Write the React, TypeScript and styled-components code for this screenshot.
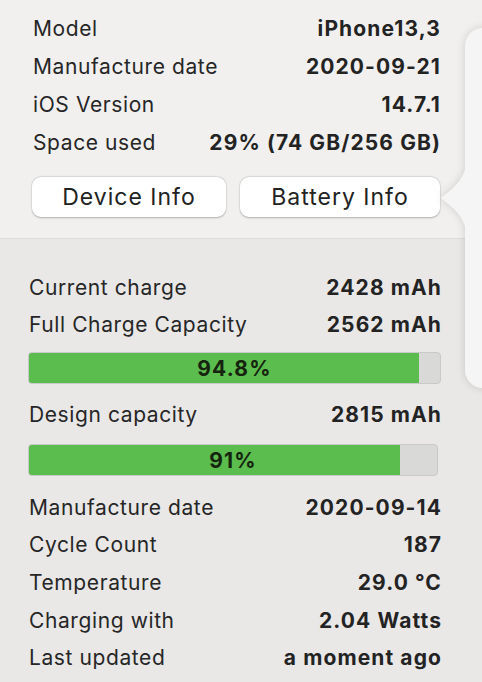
import React from 'react';
import styled, { createGlobalStyle } from 'styled-components';

const GlobalStyle = createGlobalStyle`
  html, body {
    margin: 0;
    padding: 0;
    background: #e9e8e7;
    overflow: hidden;
  }
  body {
    font-family: Inter, "Liberation Sans", sans-serif;
    -webkit-font-smoothing: antialiased;
  }
`;

const Page = styled.div`
  position: relative;
  width: 482px;
  height: 682px;
  overflow: hidden;
`;

const DeviceSection = styled.section`
  background: #f1f0ef;
  border-bottom: 1px solid #dddcdb;
  padding: 9px 42px 21px 33px;
  height: 239px;
  box-sizing: border-box;
`;

const BatterySection = styled.section`
  padding: 30px 41px 0 29px;
`;

const Row = styled.div<{ $h?: number }>`
  display: flex;
  justify-content: space-between;
  align-items: center;
  height: ${(p) => p.$h ?? 37}px;
  font-size: 21px;
  letter-spacing: 0.6px;
  color: #262626;
  white-space: nowrap;
`;

const Value = styled.span`
  font-weight: 700;
  letter-spacing: 1.1px;
  margin-right: -1px;
  color: #232323;
`;

const Buttons = styled.div`
  display: flex;
  gap: 14px;
  margin-top: 16px;
  margin-left: -1px;
`;

const Button = styled.button<{ $w: number }>`
  width: ${(p) => p.$w}px;
  height: 40px;
  border: none;
  border-radius: 9px;
  background: #ffffff;
  box-shadow: 0 0.5px 2px rgba(0, 0, 0, 0.25), 0 0 0 0.5px rgba(0, 0, 0, 0.06);
  font-family: Inter, "Liberation Sans", sans-serif;
  font-size: 23px;
  letter-spacing: 1px;
  color: #222;
  padding: 0;
`;

const Bar = styled.div<{ $w: number; $mt: number; $mb: number }>`
  position: relative;
  width: ${(p) => p.$w}px;
  height: 32px;
  margin: ${(p) => p.$mt}px 0 ${(p) => p.$mb}px -1px;
  background: #d9d9d8;
  border: 1px solid #c9c9c8;
  border-radius: 4px;
  box-sizing: border-box;
  overflow: hidden;
  display: flex;
  align-items: center;
  justify-content: center;
`;

const Fill = styled.div`
  position: absolute;
  left: -1px;
  top: -1px;
  bottom: -1px;
  background: #5bbd4d;
  border: 1px solid #4fa843;
  border-right: none;
  border-radius: 4px 0 0 4px;
`;

const BarLabel = styled.span`
  position: relative;
  font-size: 21px;
  font-weight: 700;
  color: #16240f;
  letter-spacing: 1.2px;
`;

const Popover = styled.div`
  position: absolute;
  left: 440px;
  top: 28px;
  width: 60px;
  height: 360px;
  filter: drop-shadow(0 0 4px rgba(0, 0, 0, 0.14));
`;

const PopoverBody = styled.div`
  position: absolute;
  left: 25px;
  top: 0;
  right: 0;
  bottom: 0;
  background: #f5f5f5;
  border-radius: 18px 0 0 18px;
`;

const Arrow = styled.svg`
  position: absolute;
  left: 0;
  top: 132px;
`;

const ProgressBar = ({ pct, width, label, mt, mb }: { pct: number; width: number; label: string; mt: number; mb: number }) => (
  <Bar $w={width} $mt={mt} $mb={mb}>
    <Fill style={{ width: `${pct}%` }} />
    <BarLabel>{label}</BarLabel>
  </Bar>
);

export default function App() {
  return (
    <Page>
      <GlobalStyle />
      <DeviceSection>
        <Row $h={38}>
          <span>Model</span>
          <Value>iPhone13,3</Value>
        </Row>
        <Row $h={38}>
          <span>Manufacture date</span>
          <Value>2020-09-21</Value>
        </Row>
        <Row $h={38}>
          <span>iOS Version</span>
          <Value>14.7.1</Value>
        </Row>
        <Row $h={38}>
          <span>Space used</span>
          <Value>29% (74 GB/256 GB)</Value>
        </Row>
        <Buttons>
          <Button $w={194}>Device Info</Button>
          <Button $w={200}>Battery Info</Button>
        </Buttons>
      </DeviceSection>
      <BatterySection>
        <Row>
          <span>Current charge</span>
          <Value>2428 mAh</Value>
        </Row>
        <Row>
          <span>Full Charge Capacity</span>
          <Value>2562 mAh</Value>
        </Row>
        <ProgressBar pct={94.8} width={413} label="94.8%" mt={9} mb={12} />
        <Row>
          <span>Design capacity</span>
          <Value>2815 mAh</Value>
        </Row>
        <ProgressBar pct={91} width={410} label="91%" mt={11} mb={13} />
        <Row>
          <span>Manufacture date</span>
          <Value>2020-09-14</Value>
        </Row>
        <Row>
          <span>Cycle Count</span>
          <Value>187</Value>
        </Row>
        <Row $h={38}>
          <span>Temperature</span>
          <Value>29.0 °C</Value>
        </Row>
        <Row $h={38}>
          <span>Charging with</span>
          <Value>2.04 Watts</Value>
        </Row>
        <Row>
          <span>Last updated</span>
          <Value>a moment ago</Value>
        </Row>
      </BatterySection>
      <Popover>
        <PopoverBody />
        <Arrow width="28" height="76" viewBox="0 0 28 76">
          <path d="M27 0 C26 12 21 20 13 28 L1 38 L13 48 C21 56 26 64 27 76 Z" fill="#f5f5f5" />
        </Arrow>
      </Popover>
    </Page>
  );
}
